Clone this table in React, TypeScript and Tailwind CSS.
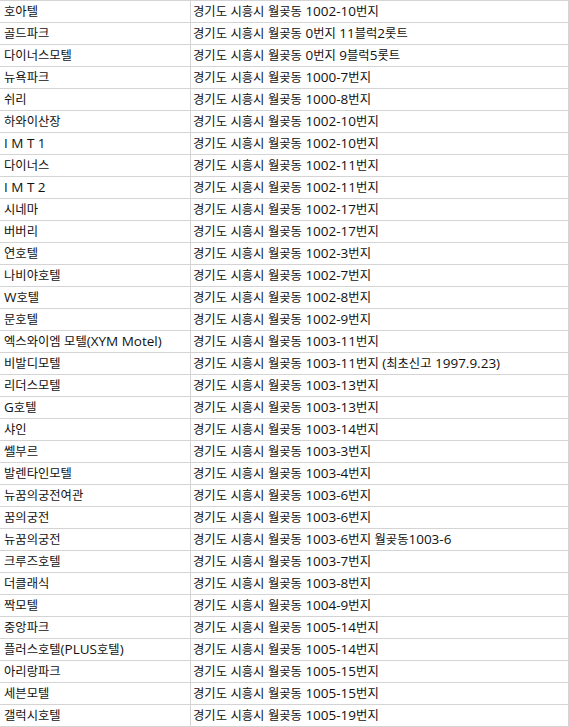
const base = '경기도 시흥시 월곶동 '

const rows: [string, string][] = [
  ['호아텔', '1002-10번지'],
  ['골드파크', '0번지 11블럭2롯트'],
  ['다이너스모텔', '0번지 9블럭5롯트'],
  ['뉴욕파크', '1000-7번지'],
  ['쉬리', '1000-8번지'],
  ['하와이산장', '1002-10번지'],
  ['I M T 1', '1002-10번지'],
  ['다이너스', '1002-11번지'],
  ['I M T 2', '1002-11번지'],
  ['시네마', '1002-17번지'],
  ['버버리', '1002-17번지'],
  ['연호텔', '1002-3번지'],
  ['나비야호텔', '1002-7번지'],
  ['W호텔', '1002-8번지'],
  ['문호텔', '1002-9번지'],
  ['엑스와이엠 모텔(XYM Motel)', '1003-11번지'],
  ['비발디모텔', '1003-11번지 (최초신고 1997.9.23)'],
  ['리더스모텔', '1003-13번지'],
  ['G호텔', '1003-13번지'],
  ['샤인', '1003-14번지'],
  ['쎌부르', '1003-3번지'],
  ['발렌타인모텔', '1003-4번지'],
  ['뉴꿈의궁전여관', '1003-6번지'],
  ['꿈의궁전', '1003-6번지'],
  ['뉴꿈의궁전', '1003-6번지 월곶동1003-6'],
  ['크루즈호텔', '1003-7번지'],
  ['더클래식', '1003-8번지'],
  ['짝모텔', '1004-9번지'],
  ['중앙파크', '1005-14번지'],
  ['플러스호텔(PLUS호텔)', '1005-14번지'],
  ['아리랑파크', '1005-15번지'],
  ['세븐모텔', '1005-15번지'],
  ['갤럭시호텔', '1005-19번지'],
]

// hangul stays in the CJK font, latin/digits get a wider sans at a slightly bigger size
function Cell({ text }: { text: string }) {
  const parts = text.match(/[\uAC00-\uD7A3\u3130-\u318F]+|[^\uAC00-\uD7A3\u3130-\u318F]+/g) ?? []
  return (
    <>
      {parts.map((p, i) =>
        /[\uAC00-\uD7A3]/.test(p) ? (
          <span key={i}>{p}</span>
        ) : (
          <span key={i} className="font-['Open_Sans',sans-serif] text-[13.5px] whitespace-pre">
            {p}
          </span>
        )
      )}
    </>
  )
}

export default function App() {
  return (
    <div className="w-[569px] bg-white text-[12.3px] leading-[21px] text-[#111] font-['Noto_Sans_CJK_KR','Noto_Sans',sans-serif]">
      <div className="border-b border-[#d4d4d4]">
        {rows.map(([name, addr], i) => (
          <div key={i} className="flex h-[22px] border-t border-[#d4d4d4]">
            <div className="w-[190px] shrink-0 pl-1 whitespace-nowrap">
              <Cell text={name} />
            </div>
            <div className="flex-1 border-l border-r border-[#d4d4d4] pl-[2px] whitespace-nowrap">
              <Cell text={base + addr} />
            </div>
          </div>
        ))}
      </div>
    </div>
  )
}
